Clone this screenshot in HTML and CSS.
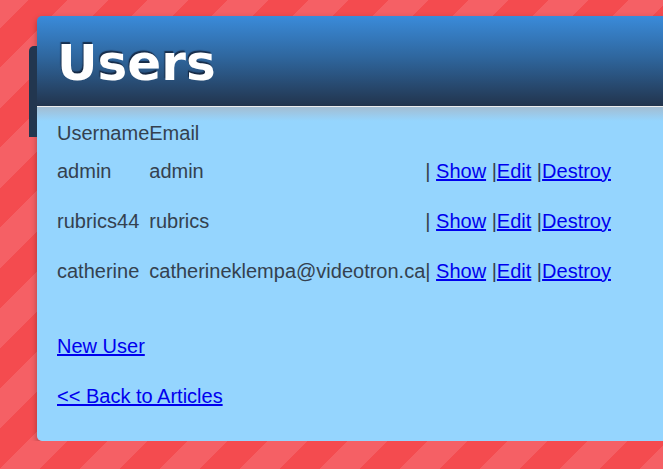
FILE: index.html
```html
<!DOCTYPE html>
<html>
<head>
<meta charset="utf-8">
<title>Users</title>
<link rel="stylesheet" href="styles.css">
</head>
<body>
<div class="card">
  <h1 class="title">Users</h1>
  <div class="content">
    <table class="users">
      <tr class="head">
        <th>Username</th>
        <th>Email</th>
        <th></th>
      </tr>
      <tr>
        <td>admin</td>
        <td>admin</td>
        <td>| <a href="#">Show</a> |<a href="#">Edit</a> |<a href="#">Destroy</a></td>
      </tr>
      <tr>
        <td>rubrics44</td>
        <td>rubrics</td>
        <td>| <a href="#">Show</a> |<a href="#">Edit</a> |<a href="#">Destroy</a></td>
      </tr>
      <tr>
        <td>catherine</td>
        <td>catherineklempa@videotron.ca</td>
        <td>| <a href="#">Show</a> |<a href="#">Edit</a> |<a href="#">Destroy</a></td>
      </tr>
    </table>
    <p class="link new"><a href="#">New User</a></p>
    <p class="link back"><a href="#">&lt;&lt; Back to Articles</a></p>
  </div>
</div>
</body>
</html>
```
FILE: styles.css
```css
html {
  height: 100%;
  background: repeating-linear-gradient(135deg,
    #f56065 0, #f56065 19.8px,
    #f44b4f 19.8px, #f44b4f 48.08px,
    #f56065 48.08px, #f56065 56.57px);
}
body {
  margin: 0;
  overflow: hidden;
  font-family: "Liberation Sans", Arial, sans-serif;
}
.card {
  margin: 16px 0 0 37px;
  border-radius: 5px 0 0 5px;
  box-shadow: 0 3px 6px rgba(0, 0, 0, 0.3);
}
.title {
  margin: 0;
  height: 58px;
  padding: 18px 19px 14px 20px;
  border-radius: 5px 0 0 0;
  background: linear-gradient(#3a8bda, #2f679f 45%, #22344d);
  border-bottom: 1px solid #ececec;
  font-family: "DejaVu Sans", Verdana, sans-serif;
  font-weight: bold;
  font-size: 50px;
  line-height: 58px;
  color: #ffffff;
  text-shadow: -1px -2px 1px rgba(15, 25, 45, 0.75);
  box-shadow: -8px 30px 0 #22364f;
}
.content {
  background: linear-gradient(#a3bdd2, #95d5fe 14px);
  padding: 15px 20px 33px 20px;
  border-radius: 0 0 0 5px;
  font-size: 20px;
  line-height: 23px;
  color: #34414f;
}
.users {
  border-collapse: separate;
  border-spacing: 0;
  font-size: 20px;
  line-height: 23px;
  color: #34414f;
}
.users th,
.users td {
  padding: 0;
  text-align: left;
  vertical-align: top;
  font-weight: normal;
  white-space: nowrap;
}
.users th {
  height: 38px;
}
.users td {
  height: 50px;
}
a {
  color: #0000ee;
  text-decoration: underline;
}
.link {
  margin: 0;
}
.new {
  margin-top: 25px;
}
.back {
  margin-top: 27px;
}
```
